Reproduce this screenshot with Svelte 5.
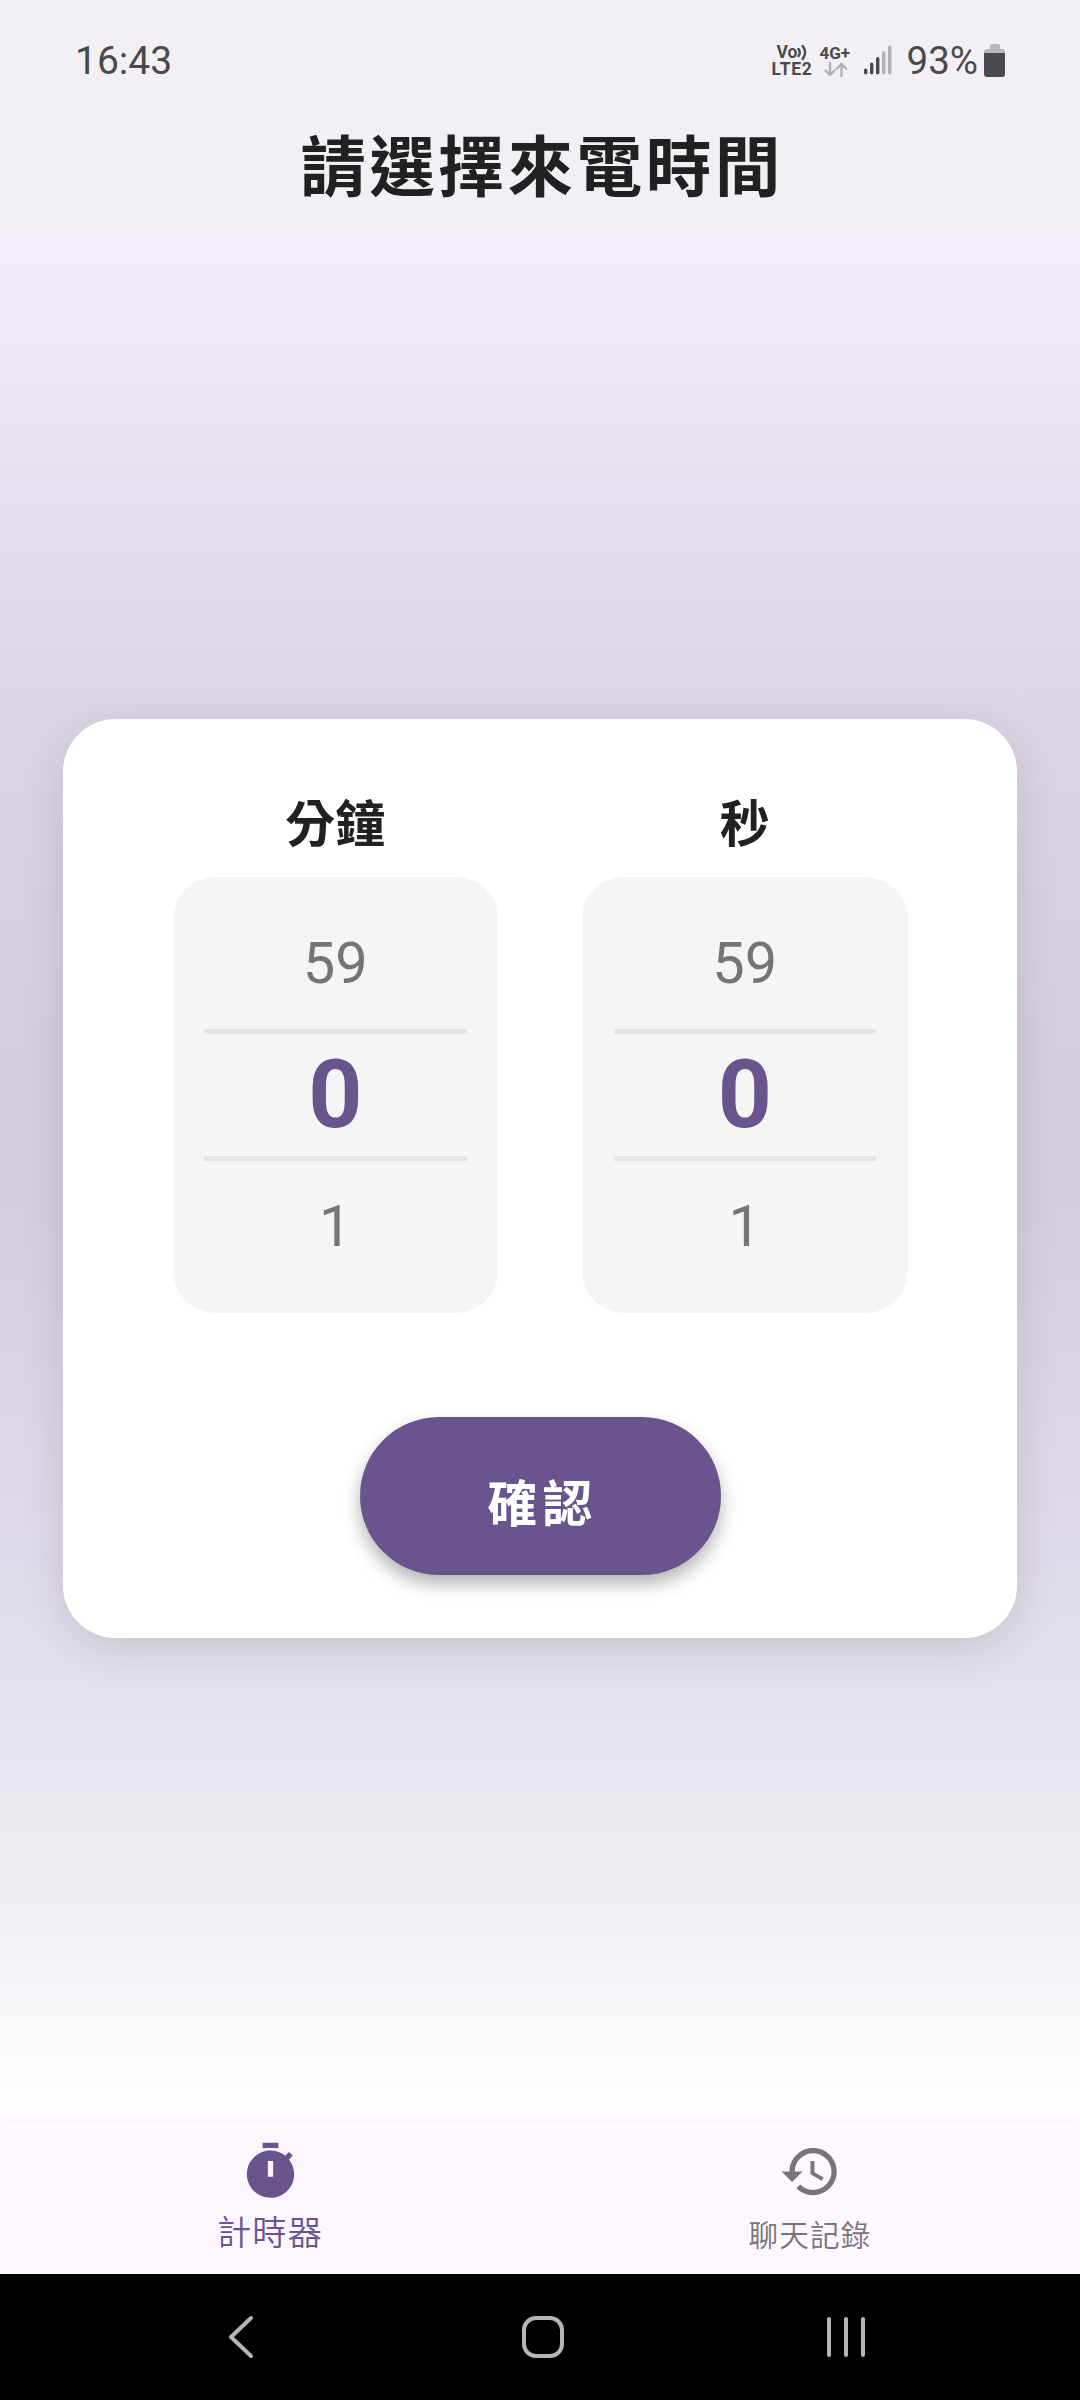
<script>
  const pickers = [
    { label: '分鐘', previous: 59, current: 0, next: 1 },
    { label: '秒', previous: 59, current: 0, next: 1 }
  ];
</script>

<div class="screen">
  <header>
    <div class="status">
      <span class="clock">16:43</span>
      <div class="indicators">
        <div class="volte">
          <span class="vo">Vo<svg width="11" height="17" viewBox="0 0 11 17"><path d="M1.500 5q2.600 3.500 0 7M5.700 2q4.800 6.500 0 13" /></svg></span>
          <span class="lte">LTE2</span>
        </div>
        <div class="network">
          <span>4G+</span>
          <svg width="24" height="15" viewBox="0 0 24 15"><path d="M6 1v12M1.500 8.500L6 13l4.500-4.500M17.500 14V2M13 6.500L17.500 2 22 6.500" /></svg>
        </div>
        <svg class="signal" width="28" height="30" viewBox="0 0 28 30">
          <path class="on" d="M1.700 25.300v2.400M7.700 19.300v8.400M13.700 13.700v14" />
          <path class="off" d="M19.700 7.700v20M25.700 2.300v25.400" />
        </svg>
        <span class="percent">93%</span>
        <svg class="battery" width="22" height="33" viewBox="0 0 22 33">
          <path fill="#b9b7bc" d="M6 2q0-2 2-2h6q2 0 2 2v3h2q3 0 3 3v5H0V8q0-3 3-3h3z" />
          <path fill="#4a494b" d="M0 9h21v21q0 3-3 3H3q-3 0-3-3z" />
        </svg>
      </div>
    </div>
    <h1>請選擇來電時間</h1>
  </header>

  <main>
    <section class="card">
      <div class="pickers">
        {#each pickers as picker}
          <div class="picker">
            <h2>{picker.label}</h2>
            <div class="wheel">
              <span>{picker.previous}</span>
              <strong>{picker.current}</strong>
              <span>{picker.next}</span>
            </div>
          </div>
        {/each}
      </div>
      <button>確認</button>
    </section>
  </main>

  <nav class="tabs">
    <div class="tab active">
      <svg width="63" height="63" viewBox="0 0 24 24"><path d="M15 1H9v2h6V1zm4.030 6.390l1.420-1.420c-.43-.51-.9-.99-1.410-1.410l-1.420 1.420C16.070 4.740 14.120 4 12 4c-4.970 0-9 4.030-9 9s4.020 9 9 9 9-4.030 9-9c0-2.120-.74-4.070-1.970-5.610zM13 14h-2V8h2v6z" /></svg>
      <span>計時器</span>
    </div>
    <div class="tab">
      <svg width="63" height="63" viewBox="0 0 24 24"><path d="M13 3c-4.970 0-9 4.030-9 9H1l3.890 3.890.07.14L9 12H6c0-3.870 3.130-7 7-7s7 3.130 7 7-3.130 7-7 7c-1.930 0-3.680-.79-4.940-2.060l-1.420 1.420C8.270 19.990 10.510 21 13 21c4.970 0 9-4.030 9-9s-4.030-9-9-9zm-1 5v5l4.280 2.540.72-1.210-3.500-2.080V8H12z" /></svg>
      <span>聊天記錄</span>
    </div>
  </nav>

  <footer>
    <svg width="26" height="44" viewBox="0 0 26 44"><path d="M23 3L3 22l20 19" /></svg>
    <svg class="home" width="44" height="44" viewBox="0 0 44 44"><rect x="3" y="3" width="38" height="38" rx="12" /></svg>
    <svg width="40" height="44" viewBox="0 0 40 44"><path d="M3 4v36M20 4v36M37 4v36" /></svg>
  </footer>
</div>

<style>
  :global(body) {
    margin: 0;
  }
  .screen {
    width: 1080px;
    height: 2400px;
    display: flex;
    flex-direction: column;
    overflow: hidden;
    font-family: Roboto, 'Noto Sans CJK TC', sans-serif;
    color: #212121;
  }
  header {
    height: 235px;
    background: #f3f0f5;
  }
  .status {
    height: 120px;
    box-sizing: border-box;
    padding: 0 74px 0 75px;
    display: flex;
    justify-content: space-between;
    align-items: center;
    color: #4a494b;
    font-size: 38.500px;
  }
  .clock {
    padding-top: 2px;
    font-size: 39px;
  }
  .indicators {
    display: flex;
    align-items: center;
  }
  .volte,
  .network {
    display: flex;
    flex-direction: column;
    font-weight: 700;
    font-size: 17px;
    line-height: 17px;
  }
  .volte {
    width: 48px;
    padding-top: 2px;
  }
  .vo {
    padding-left: 5px;
    display: flex;
    font-size: 17.500px;
  }
  .lte {
    font-size: 17.500px;
    letter-spacing: 0.700px;
  }
  .volte svg,
  .network svg {
    fill: none;
    stroke: #4a494b;
    stroke-width: 2.400;
    stroke-linecap: round;
  }
  .network {
    width: 44px;
    padding-top: 2px;
  }
  .network svg {
    margin-left: 4px;
    stroke: #b3b1b6;
    stroke-linejoin: round;
  }
  .signal {
    margin-right: 15px;
    fill: none;
    stroke-width: 3.400;
    stroke-linecap: round;
  }
  .on {
    stroke: #4a494b;
  }
  .off {
    stroke: #b3b1b6;
  }
  .battery {
    margin-left: 6px;
  }
  h1 {
    margin: 0;
    padding: 3px 0 0 4px;
    text-align: center;
    font-size: 65.600px;
    line-height: 92px;
    letter-spacing: 3.500px;
    font-weight: 700;
  }
  main {
    flex: 1;
    display: flex;
    align-items: center;
    justify-content: center;
    background: linear-gradient(#f6edfa 0%, #e7dfed 13%, #dcd4e5 25%, #d6cddf 43%, #d5cddf 50%, #dad3e3 60%, #e1dde9 74%, #edeaf1 86%, #fafafc 96%, #fff 100%);
  }
  .card {
    width: 954px;
    height: 919px;
    box-sizing: border-box;
    padding: 64px 0 63px;
    display: flex;
    flex-direction: column;
    align-items: center;
    justify-content: space-between;
    background: #fff;
    border-radius: 52.500px;
    box-shadow: 0 12px 46px rgba(0, 0, 0, 0.11);
  }
  .pickers {
    display: flex;
    gap: 84px;
  }
  h2 {
    margin: 0;
    height: 94px;
    text-align: center;
    font-size: 49.900px;
    line-height: 85px;
    font-weight: 700;
  }
  .wheel {
    width: 325.500px;
    height: 435.500px;
    box-sizing: border-box;
    padding: 21px 31.500px;
    display: grid;
    grid-template-rows: repeat(3, 131.250px);
    background: #f5f5f5;
    border-radius: 42px;
    text-align: center;
    line-height: 131px;
    font-size: 57.750px;
    color: #757575;
  }
  .wheel strong {
    box-sizing: border-box;
    border: solid #e5e5e5;
    border-width: 5px 0;
    line-height: 121px;
    font-size: 94.500px;
    color: #69548d;
  }
  button {
    width: 361px;
    height: 158px;
    padding: 18px 0 0 5px;
    border: 0;
    border-radius: 79px;
    background: #69548d;
    color: #fff;
    font: 700 49.900px/140px Roboto, 'Noto Sans CJK TC', sans-serif;
    letter-spacing: 5px;
    box-shadow: 0 9px 18px rgba(0, 0, 0, 0.3);
  }
  .tabs {
    height: 152px;
    display: flex;
    background: #fef7ff;
    box-shadow: 0 -2px 10px rgba(0, 0, 0, 0.06);
  }
  .tab {
    flex: 1;
    padding-top: 18px;
    display: flex;
    flex-direction: column;
    align-items: center;
    color: #79747a;
    font-size: 29.600px;
    font-weight: 350;
    letter-spacing: 1.100px;
    line-height: 67px;
  }
  .tab svg {
    fill: currentColor;
  }
  .tab.active {
    color: #69548d;
    font-size: 34.200px;
    line-height: 61px;
  }
  footer {
    height: 126px;
    box-sizing: border-box;
    padding: 0 214px 0 228px;
    display: flex;
    align-items: center;
    justify-content: space-between;
    background: #000;
  }
  footer svg {
    fill: none;
    stroke: #b5b5b5;
    stroke-width: 4;
    stroke-linecap: round;
    stroke-linejoin: round;
  }
  .home {
    margin-left: 6px;
  }
</style>
